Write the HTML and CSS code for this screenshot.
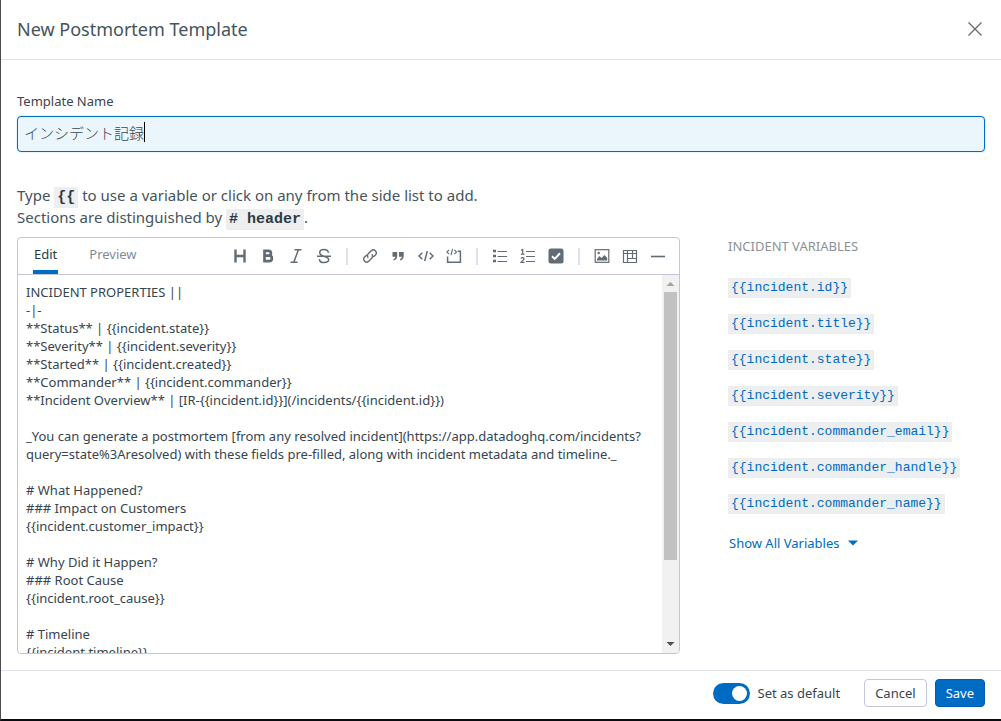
FILE: index.html
```html
<!DOCTYPE html>
<html lang="en">
<head>
<meta charset="utf-8">
<meta name="viewport" content="width=device-width, initial-scale=1">
<title>New Postmortem Template</title>
<link rel="stylesheet" href="styles.css">
</head>
<body>
<form class="modal" onsubmit="return false">
  <header class="modal-header">
    <h1 class="modal-title">New Postmortem Template</h1>
    <button class="icon-button close" type="button" aria-label="Close">
      <svg width="16" height="16" viewBox="0 0 16 16"><path d="M1.500 1.500l13 13M14.500 1.500l-13 13" stroke-width="1.300"/></svg>
    </button>
  </header>

  <main class="modal-body">
    <label class="field-label" for="name">Template Name</label>
    <div class="name-field">
      <input class="name-input" id="name" type="text" value="インシデント記録">
      <span class="caret" aria-hidden="true"></span>
    </div>

    <p class="intro">Type <code class="code">{{</code> to use a variable or click on any from the side list to add.<br>Sections are distinguished by <code class="code"># header</code>.</p>

    <div class="columns">
      <section class="editor">
        <div class="toolbar">
          <div class="tabs" role="tablist">
            <button class="tab tab-active" type="button" role="tab" aria-selected="true">Edit</button>
            <button class="tab" type="button" role="tab" aria-selected="false">Preview</button>
          </div>
          <div class="tools">
            <button class="icon-button" type="button" aria-label="Heading"><svg width="16" height="16" viewBox="0 0 16 16"><path d="M3.500 1.500v13M12.500 1.500v13M3.500 8h9" stroke-width="2.400"/></svg></button>
            <button class="icon-button" type="button" aria-label="Bold"><svg width="16" height="16" viewBox="0 0 16 16"><path d="M4.500 2.800h4a2.400 2.400 0 0 1 0 4.900h-4zM4.500 7.700h4.600a2.700 2.700 0 0 1 0 5.500H4.500z" stroke-width="2.700"/></svg></button>
            <button class="icon-button" type="button" aria-label="Italic"><svg width="16" height="16" viewBox="0 0 16 16"><path d="M6.500 1.800h7M2.500 14.200h7M10.300 2L5.900 14" stroke-width="1.500"/></svg></button>
            <button class="icon-button" type="button" aria-label="Strikethrough"><svg width="16" height="16" viewBox="0 0 16 16"><path d="M1 8.300h14M12.400 4.800C12.200 2.600 10.500 1.500 8 1.500S3.700 2.700 3.700 4.700C3.700 6.500 5 7.300 8 8.200s4.700 1.800 4.700 3.400c0 1.900-1.900 3-4.600 3s-4.600-1.200-4.800-3.500" stroke-width="1.500"/></svg></button>
            <span class="divider"></span>
            <button class="icon-button" type="button" aria-label="Link"><svg width="16" height="16" viewBox="0 0 16 16"><path d="M6.300 9.700a2.700 2.700 0 0 1 0-3.900l3-3a2.900 2.900 0 0 1 4.100 4.100l-2.200 2.200M9.700 6.300a2.700 2.700 0 0 1 0 3.900l-3 3a2.900 2.900 0 0 1-4.100-4.100l2.200-2.200" stroke-width="1.400"/></svg></button>
            <button class="icon-button" type="button" aria-label="Quote"><svg width="16" height="16" viewBox="0 0 16 16"><path class="solid" d="M2.500 4h4.700v4.300c0 2.300-1.300 3.900-3.700 4.300v-1.500c1.200-.4 1.800-1.200 1.900-2.300H2.500zM9 4h4.700v4.300c0 2.300-1.300 3.900-3.700 4.300v-1.500c1.200-.4 1.800-1.200 1.900-2.300H9z"/></svg></button>
            <button class="icon-button" type="button" aria-label="Code"><svg width="16" height="16" viewBox="0 0 16 16"><path d="M4.300 4.700L1 8l3.300 3.300M11.700 4.700L15 8l-3.300 3.300M9.300 3L6.700 13" stroke-width="1.500"/></svg></button>
            <button class="icon-button" type="button" aria-label="Code block"><svg width="16" height="16" viewBox="0 0 16 16"><path d="M1.600 8.500v5.700h12.800V3.200h-2.700" stroke-width="1.500"/><path d="M3 1.800L.9 4 3 6.200M8.400 1.800L10.500 4 8.400 6.200M6.500.8L5 7.200" stroke-width="1.100"/></svg></button>
            <span class="divider"></span>
            <button class="icon-button" type="button" aria-label="Bulleted list"><svg width="16" height="16" viewBox="0 0 16 16"><path d="M1 3h3M1 8h3M1 13h3" stroke-width="2.600"/><path d="M5.500 3.500H15M5.500 8.500H15M5.500 13.500H15" stroke-width="1.200"/></svg></button>
            <button class="icon-button" type="button" aria-label="Numbered list"><svg width="16" height="16" viewBox="0 0 16 16"><path d="M1 2.300l1.700-.9V6M1 6.200h3.500M1 10.600c.5-1.600 3.200-1.300 3 .3-.1 1.200-2.200 2-3 3.500h3.500" stroke-width="1.200"/><path d="M6 3.500h9M6 8.500h9M6 13.500h9" stroke-width="1.200"/></svg></button>
            <button class="icon-button" type="button" aria-label="Checklist"><svg width="16" height="16" viewBox="0 0 16 16"><rect class="solid" x=".5" y=".5" width="15" height="15" rx="2.500"/><path class="tick" d="M4 8.200l2.700 2.700 5.300-5.600" stroke-width="2"/></svg></button>
            <span class="divider"></span>
            <button class="icon-button" type="button" aria-label="Image"><svg width="16" height="16" viewBox="0 0 16 16"><rect x="1.200" y="1.700" width="13.600" height="12.600" stroke-width="1.200"/><path class="solid" d="M3 12.500V11l2.500-3 2 2L10.500 7l2.700 3v2.500z"/><circle class="solid" cx="4.700" cy="5" r="1.200"/></svg></button>
            <button class="icon-button" type="button" aria-label="Table"><svg width="16" height="16" viewBox="0 0 16 16"><path d="M1.500 2.500h13v12h-13zM5.500 2.500v12M10.500 2.500v8M1.500 5.500h13M5.500 10.500h9" stroke-width="1.200"/></svg></button>
            <button class="icon-button" type="button" aria-label="Horizontal rule"><svg width="16" height="16" viewBox="0 0 16 16"><path d="M1 8.500h14" stroke-width="1.600"/></svg></button>
          </div>
        </div>
        <div class="editor-area">
          <textarea class="editor-text" aria-label="Template content" spellcheck="false">INCIDENT PROPERTIES ||
-|-
**Status** | {{incident.state}}
**Severity** | {{incident.severity}}
**Started** | {{incident.created}}
**Commander** | {{incident.commander}}
**Incident Overview** | [IR-{{incident.id}}](/incidents/{{incident.id}})

_You can generate a postmortem [from any resolved incident](https://app.datadoghq.com/incidents?query=state%3Aresolved) with these fields pre-filled, along with incident metadata and timeline._

# What Happened?
### Impact on Customers
{{incident.customer_impact}}

# Why Did it Happen?
### Root Cause
{{incident.root_cause}}

# Timeline
{{incident.timeline}}</textarea>
          <div class="scrollbar" aria-hidden="true">
            <svg class="arrow arrow-up" width="17" height="17" viewBox="0 0 17 17"><path d="M4.500 11h8l-4-4z"/></svg>
            <div class="track"><div class="thumb"></div></div>
            <svg class="arrow arrow-down" width="17" height="17" viewBox="0 0 17 17"><path d="M4.500 6h8l-4 4z"/></svg>
          </div>
        </div>
      </section>

      <aside class="variables">
        <h2 class="variables-title">INCIDENT VARIABLES</h2>
        <ul class="variable-list">
          <li><button class="variable" type="button">{{incident.id}}</button></li>
          <li><button class="variable" type="button">{{incident.title}}</button></li>
          <li><button class="variable" type="button">{{incident.state}}</button></li>
          <li><button class="variable" type="button">{{incident.severity}}</button></li>
          <li><button class="variable" type="button">{{incident.commander_email}}</button></li>
          <li><button class="variable" type="button">{{incident.commander_handle}}</button></li>
          <li><button class="variable" type="button">{{incident.commander_name}}</button></li>
        </ul>
        <button class="show-all" type="button">Show All Variables <svg width="10" height="6" viewBox="0 0 10 6"><path d="M0 .5h10L5 5.500z"/></svg></button>
      </aside>
    </div>
  </main>

  <footer class="modal-footer">
    <label class="default-toggle"><input class="switch" type="checkbox" role="switch" checked>Set as default</label>
    <button class="button" type="button">Cancel</button>
    <button class="button button-primary" type="submit">Save</button>
  </footer>
</form>
</body>
</html>
```

FILE: styles.css
```css
* {
  box-sizing: border-box;
}

body {
  margin: 0;
  background: #fff;
  color: #36454f;
  font-family: "Noto Sans", "Noto Sans CJK JP", sans-serif;
  font-size: 13px;
  line-height: 18px;
}

button,
input,
textarea {
  font: inherit;
  color: inherit;
}

button {
  padding: 0;
  border: 0;
  background: none;
  cursor: pointer;
}

svg {
  display: block;
}

.modal {
  display: flex;
  flex-direction: column;
  min-height: 100vh;
  border-left: 1px solid #4c4c4e;
  border-bottom: 2px solid #080b12;
}

.modal-header {
  display: flex;
  align-items: center;
  justify-content: space-between;
  padding: 15px 18px 16px 16px;
  border-bottom: 1px solid #dfe0ec;
}

.modal-title {
  margin: 0;
  font-size: 18px;
  font-weight: 400;
  line-height: 28px;
  color: #45535c;
}

.icon-button svg {
  fill: none;
  stroke: #626c75;
}

.icon-button .solid {
  fill: #626c75;
  stroke: none;
}

.icon-button .tick {
  stroke: #fff;
}

.modal-body {
  flex: 1;
  display: flex;
  flex-direction: column;
  padding: 32px 16px 16px;
}

.field-label {
  margin-bottom: 6px;
}

.name-field {
  position: relative;
}

.name-input {
  display: block;
  width: 100%;
  height: 36px;
  padding: 0 6px 4px;
  border: 1px solid #006bc2;
  border-radius: 4px;
  outline: 0;
  background: #eaf5fc;
  box-shadow: 0 0 2px #b5d5ee;
  font-size: 15px;
  font-weight: 300;
}

.caret {
  position: absolute;
  top: 6px;
  left: 127px;
  width: 1px;
  height: 20px;
  background: #000;
}

.intro {
  margin: 32px 0 9px;
  font-size: 15px;
  line-height: 22px;
  color: #45535c;
}

.code {
  padding: 2px 3px;
  background: #edeef0;
  color: #2b3b45;
  font-family: "Liberation Mono", monospace;
  font-size: 15px;
  font-weight: 700;
  line-height: 1;
}

.columns {
  flex: 1;
  display: flex;
  gap: 48px;
}

.editor {
  flex: 1;
  display: flex;
  flex-direction: column;
  min-width: 0;
  border: 1px solid #c3c6da;
  border-radius: 4px;
  overflow: hidden;
}

.toolbar {
  display: flex;
  justify-content: space-between;
  height: 37px;
  padding: 0 13px 0 15px;
  border-bottom: 1px solid #c3c6da;
}

.tabs {
  display: flex;
  gap: 30px;
}

.tab {
  padding: 0 1px;
  border-bottom: 4px solid transparent;
  color: #818b93;
}

.tab-active {
  border-color: #006bc2;
  color: #2b3b45;
}

.tools {
  display: flex;
  align-items: center;
  gap: 12px;
}

.divider {
  width: 2px;
  height: 17px;
  margin: 0 2px;
  background: #dfe0ec;
}

.editor-area {
  flex: 1;
  display: flex;
  min-height: 0;
}

.editor-text {
  flex: 1;
  min-width: 0;
  padding: 8px;
  border: 0;
  outline: 0;
  resize: none;
  background: none;
  scrollbar-width: none;
}

.scrollbar {
  display: flex;
  flex-direction: column;
  width: 17px;
  background: #f1f1f1;
}

.arrow-up {
  fill: #a3a3a3;
}

.arrow-down {
  fill: #505050;
}

.track {
  flex: 1;
  padding: 0 2px;
}

.thumb {
  height: 78%;
  background: #c1c1c1;
}

.variables {
  width: 257px;
}

.variables-title {
  margin: 0;
  font-size: 13px;
  font-weight: 400;
  color: #8a9298;
}

.variable-list {
  display: grid;
  gap: 16px;
  margin: 23px 0 20px;
  padding: 0;
  list-style: none;
}

.variable-list li {
  display: flex;
}

.variable {
  padding: 0 3px;
  background: #edeef0;
  color: #006bc2;
  font-family: "Liberation Mono", monospace;
  line-height: 20px;
}

.show-all {
  display: flex;
  align-items: center;
  gap: 8px;
  padding: 0 1px;
  color: #006bc2;
}

.show-all svg {
  fill: #006bc2;
}

.modal-footer {
  display: flex;
  align-items: center;
  justify-content: flex-end;
  gap: 8px;
  padding: 8px 16px 12px;
  border-top: 1px solid #dfe0ec;
}

.default-toggle {
  display: flex;
  align-items: center;
  gap: 8px;
  margin-right: 16px;
}

.switch {
  appearance: none;
  display: flex;
  align-items: center;
  width: 37px;
  height: 21px;
  margin: 0;
  padding: 0 3px;
  border-radius: 11px;
  background: #b4b9c4;
}

.switch::before {
  content: "";
  width: 15px;
  height: 15px;
  border-radius: 50%;
  background: #fff;
}

.switch:checked {
  justify-content: flex-end;
  background: #006bc2;
}

.button {
  height: 28px;
  padding: 0 10px;
  border: 1px solid #c3c6da;
  border-radius: 4px;
  background: #fff;
}

.button-primary {
  border-color: #005cb9;
  background: #006bc2;
  color: #fff;
}
```
